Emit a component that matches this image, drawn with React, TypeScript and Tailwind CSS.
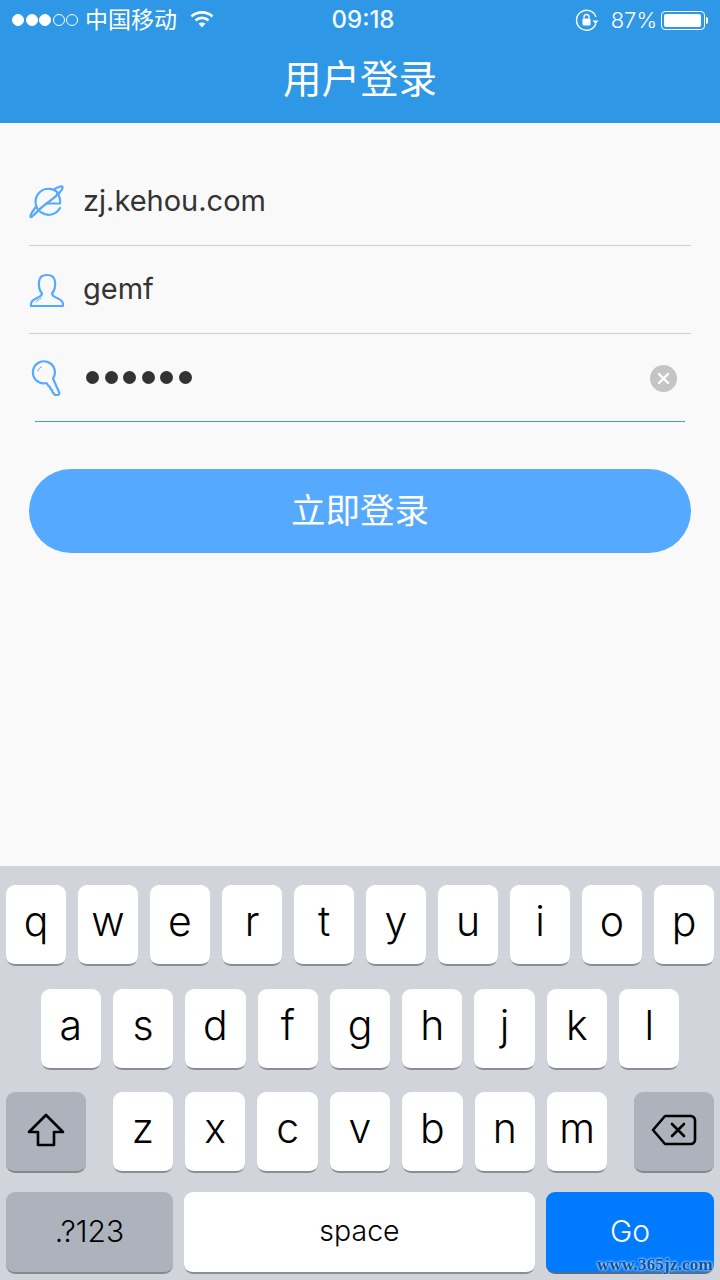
const font = { fontFamily: 'Inter, "Noto Sans CJK SC", sans-serif' };

function Key({ label, w = "w-[60px]" }: { label: string; w?: string }) {
  return (
    <div className={`${w} h-[81px] shrink-0 rounded-[9px] bg-white border-b-2 border-[#8b8d91] flex items-center justify-center text-[41px] font-[350] text-black leading-none pb-1.5`}>
      {label}
    </div>
  );
}

function Row({ keys, w }: { keys: string; w?: string }) {
  return (
    <>
      {keys.split("").map((k) => (
        <Key key={k} label={k} w={w} />
      ))}
    </>
  );
}

function Field({ icon, children, right, line = "border-[#d0d0d0]", inset = "mx-[29px]" }: any) {
  return (
    <div className={`${inset} h-[88px] border-b ${line} flex items-center`}>
      <div className="w-[54px] shrink-0 flex items-center">{icon}</div>
      <div className="flex-1 text-[29px] text-[#333333] leading-none pb-[2px]">{children}</div>
      {right}
    </div>
  );
}

export default function App() {
  return (
    <div style={font} className="w-[720px] h-[1280px] bg-[#f9f9f9] flex flex-col overflow-hidden">
      <div className="h-[123px] bg-[#2e98e6] text-white flex flex-col shrink-0">
        <div className="h-[40px] flex items-center px-3 text-[25px] leading-none">
          <div className="flex-1 flex items-center">
            <div className="flex items-center gap-[1.5px]">
              {[1, 1, 1, 0, 0].map((f, i) => (
                <span key={i} className={`w-[12px] h-[12px] rounded-full border border-white ${f ? "bg-white" : ""}`} />
              ))}
            </div>
            <span className="ml-[7px] text-[23px]">中国移动</span>
            <svg className="ml-[13px] -mt-[3px]" width="24" height="18" viewBox="0 0 24 18" fill="none" stroke="white" strokeWidth="2.6">
              <path d="M1.5 6.5C7 1 17 1 22.5 6.5" />
              <path d="M5.5 10.5C9 7 15 7 18.5 10.5" />
              <path d="M12 17.5L8.5 13.5C10.5 12 13.5 12 15.5 13.5Z" fill="white" stroke="none" />
            </svg>
          </div>
          <div className="w-[100px] text-center font-medium text-[24px] text-[#f4f9fe] ml-[6px]">09:18</div>
          <div className="flex-1 flex items-center justify-end">
            <svg className="-mt-[1px]" width="24" height="24" viewBox="0 0 24 24" fill="none" stroke="white" strokeWidth="1.4">
              <path d="M21 15.5A10 10 0 1 1 21 9" />
              <path d="M17.5 12.5h6l-3 3.6Z" fill="white" stroke="none" />
              <rect x="7.5" y="10.5" width="8" height="7" rx="1" fill="white" stroke="none" />
              <path d="M9 10.5V9a2.5 2.5 0 0 1 5 0v1.5" strokeWidth="1.3" />
            </svg>
            <span className="ml-[12px] text-[22px] font-light">87%</span>
            <div className="ml-[4px] flex items-center">
              <div className="w-[44px] h-[19px] rounded-[4px] border border-white p-[2px]">
                <div className="w-[37px] h-full bg-white rounded-[2px]" />
              </div>
              <div className="w-[2px] h-[7px] ml-[1px] bg-white rounded-r" />
            </div>
          </div>
        </div>
        <div className="flex-1 flex items-center justify-center text-[38.5px] leading-none pb-[4px]">用户登录</div>
      </div>

      <div className="flex-1 flex flex-col pt-[35px]">
        <Field
          icon={
            <svg width="36" height="36" viewBox="0 0 36 36" fill="none" stroke="#55aaff" strokeWidth="2.2" strokeLinecap="round">
              <path d="M31 24A13 13 0 1 1 30 10" />
              <path d="M17 19.5H31C31.6 15 30.5 12 28 9.5" />
              <path d="M25 5.5C29 3 33 1.5 33.5 3C34.5 5.5 26 13.5 17 20C9 25.5 2.5 34.5 1.5 33C0.8 31.5 3 28 6.5 23.5" />
            </svg>
          }
        >
          zj.kehou.com
        </Field>
        <Field
          icon={
            <svg width="36" height="36" viewBox="0 0 36 36" fill="none" stroke="#55aaff" strokeWidth="2.2" strokeLinecap="round" strokeLinejoin="round">
              <path d="M13 21.5C10 18 9.5 14 10 9.5C10.5 5 14 3 18 3C22 3 25.5 5 26 9.5C26.5 14 26 18 23 21.5C23 24 25 24.5 28 26C31 27.5 34 28.5 34 32V34H2V32C2 28.5 5 27.5 8 26C11 24.5 13 24 13 21.5Z" />
              <path d="M7 30C8 28 10 27.5 12 26.5" strokeWidth="1" />
            </svg>
          }
        >
          gemf
        </Field>
        <Field
          inset="mx-[35px]"
          line="border-[#3f97e6]"
          icon={
            <svg className="-ml-[6px]" width="36" height="36" viewBox="0 0 36 36" fill="none" stroke="#55aaff" strokeWidth="2.2" strokeLinecap="round" strokeLinejoin="round">
              <path d="M24 18.5A11 11 0 1 0 17.5 23L19.5 26L21 27L21.5 29L23 30L23.5 32L26 35L29 35C30.5 34.5 30.5 33 30 32Z" />
              <path d="M9 11C9.5 9 10.5 7.5 12.5 7" strokeWidth="1" />
            </svg>
          }
          right={
            <div className="w-[27px] h-[27px] rounded-full bg-[#c4c4c4] flex items-center justify-center mr-[8px] mt-[2px]">
              <svg width="13" height="13" viewBox="0 0 13 13" stroke="white" strokeWidth="2.4" strokeLinecap="round">
                <path d="M2 2L11 11M11 2L2 11" />
              </svg>
            </div>
          }
        >
          <div className="flex gap-[5.5px] ml-[-3px] mt-[2px]">
            {[0, 1, 2, 3, 4, 5].map((i) => (
              <span key={i} className="w-[13px] h-[13px] rounded-full bg-[#333333]" />
            ))}
          </div>
        </Field>

        <div className="mx-[29px] mt-[47px] h-[84px] rounded-[42px] bg-[#55aaff] flex items-center justify-center text-white text-[34.5px] leading-none">
          立即登录
        </div>
      </div>

      <div className="h-[414px] shrink-0 bg-[#d1d4db] flex flex-col pt-[19px]">
        <div className="flex justify-center gap-3">
          <Row keys="qwertyuiop" />
        </div>
        <div className="flex justify-center gap-[12px] mt-[23px]">
          <Row keys="asdfghjkl" w="w-[60.3px]" />
        </div>
        <div className="flex items-start mt-[22px] px-[6px]">
          <div className="w-[80px] h-[81px] rounded-[9px] bg-[#acb3bd] border-b-2 border-[#85888d] flex items-center justify-center pb-1">
            <svg width="38" height="34" viewBox="0 0 38 34" fill="none" stroke="black" strokeWidth="2.6" strokeLinejoin="round">
              <path d="M19 2L36 19H27V32H11V19H2Z" />
            </svg>
          </div>
          <div className="flex-1 flex justify-center gap-3">
            <Row keys="zxcvbnm" w="w-[60.4px]" />
          </div>
          <div className="w-[80px] h-[81px] rounded-[9px] bg-[#acb3bd] border-b-2 border-[#85888d] flex items-center justify-center pb-1">
            <svg width="46" height="34" viewBox="0 0 46 34" fill="none" stroke="black" strokeWidth="2.6" strokeLinejoin="round" strokeLinecap="round">
              <path d="M14 3H40C42 3 44 5 44 7V27C44 29 42 31 40 31H14L2 17Z" />
              <path d="M21 11L33 23M33 11L21 23" />
            </svg>
          </div>
        </div>
        <div className="flex mt-[19px] px-[6px] gap-[11px]">
          <div className="w-[167px] h-[82px] rounded-[9px] bg-[#acb3bd] border-b-2 border-[#85888d] flex items-center justify-center text-[30px] font-[350] text-black leading-none pb-[2px]">
            .?123
          </div>
          <div className="flex-1 h-[82px] rounded-[9px] bg-white border-b-2 border-[#8b8d91] flex items-center justify-center text-[28.5px] font-[350] text-black leading-none pb-[2px]">
            space
          </div>
          <div className="relative w-[168px] h-[82px] rounded-[9px] bg-[#007aff] border-b-2 border-[#5c6a7c] flex items-center justify-center text-[30px] font-light text-white leading-none pb-[2px]">
            Go
          </div>
        </div>
      </div>
      <div
        className="fixed left-[597px] top-[1256px] text-[17px] leading-none font-bold text-[#154f8f] tracking-[0.2px] [text-shadow:0_0_3px_#bfe0ff,0_0_3px_#bfe0ff]"
        style={{ fontFamily: '"Liberation Serif", serif' }}
      >
        www.365jz.com
      </div>
    </div>
  );
}
